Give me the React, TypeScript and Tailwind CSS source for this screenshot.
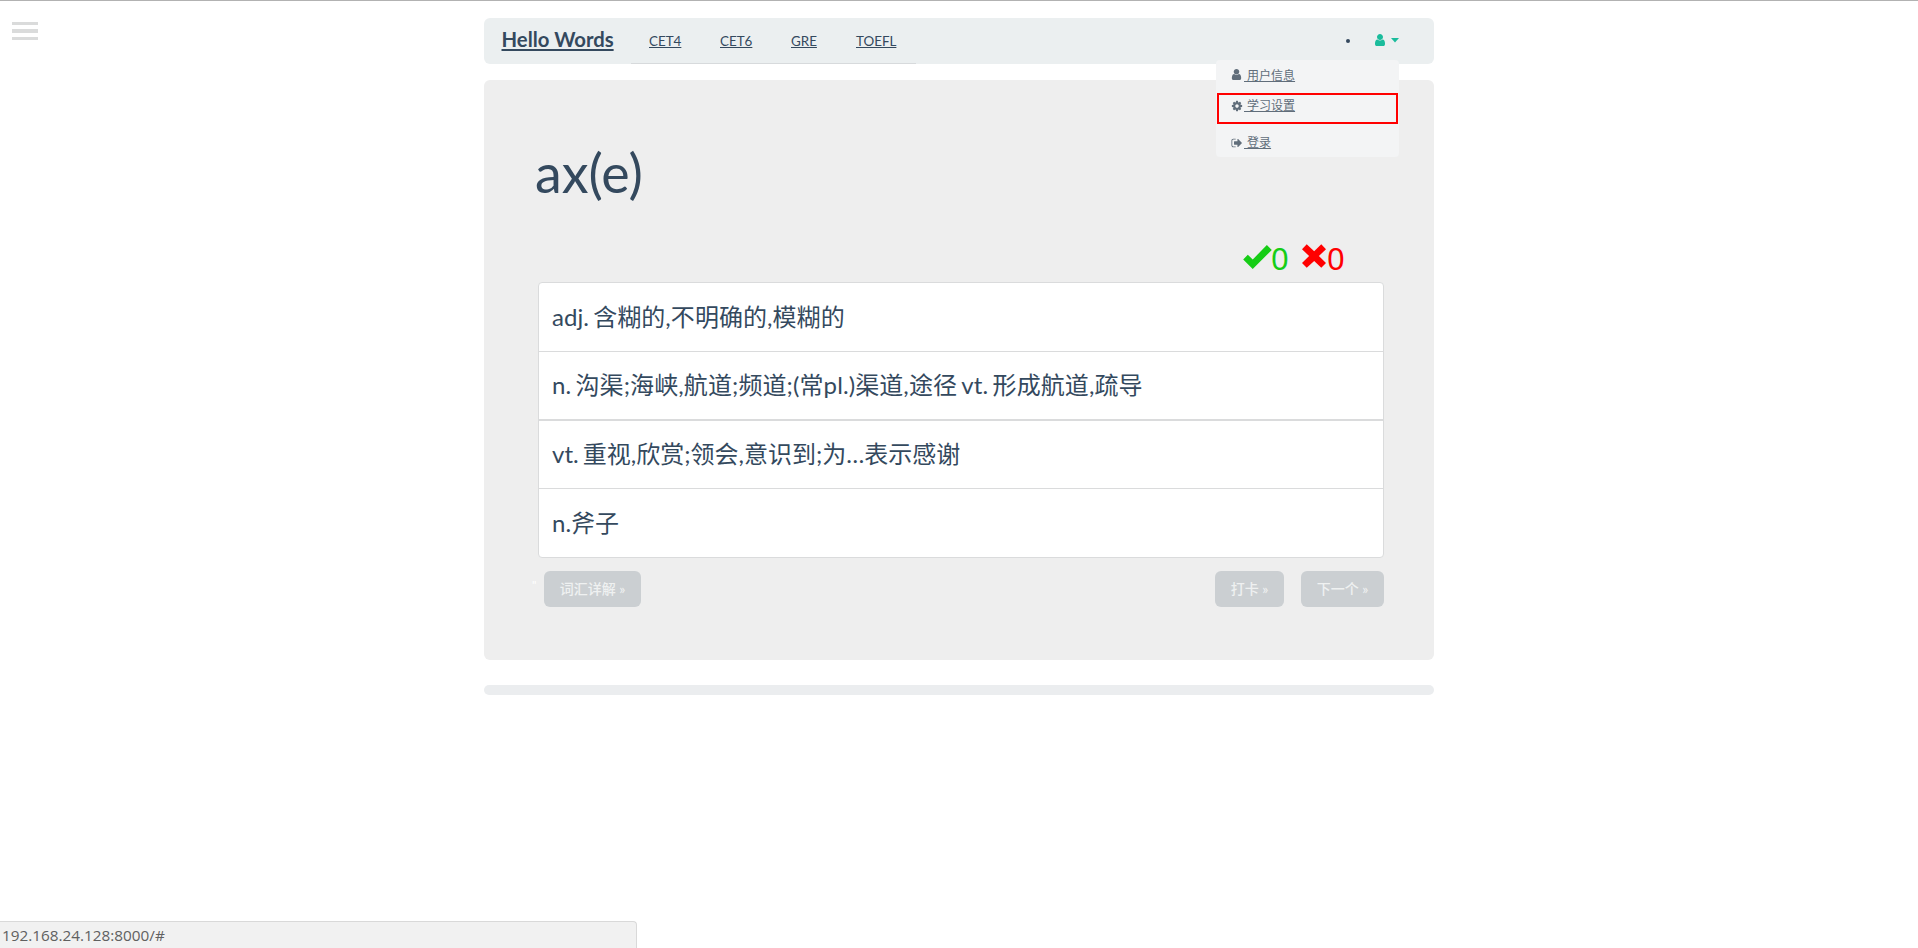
import React from "react";

const USER_PATH =
  "M1536 1399q0 109-62.5 187t-150.5 78h-854q-88 0-150.5-78t-62.5-187q0-85 8.5-160.5t31.5-152 58.5-131 94-89 134.5-34.5q131 128 313 128t313-128q76 0 134.5 34.5t94 89 58.5 131 31.5 152 8.5 160.5zm-256-887q0 159-112.5 271.5t-271.5 112.5-271.5-112.5-112.5-271.5 112.5-271.5 271.5-112.5 271.5 112.5 112.5 271.5z";
const COG_PATH =
  "M1152 896q0-106-75-181t-181-75-181 75-75 181 75 181 181 75 181-75 75-181zm512-109v222q0 12-8 23t-20 13l-185 28q-19 54-39 91 35 50 107 138 10 12 10 25t-9 23q-27 37-99 108t-94 71q-12 0-26-9l-138-108q-44 23-91 38-16 136-29 186-7 28-36 28h-222q-14 0-24.5-8.5t-11.5-21.5l-28-184q-49-16-90-37l-141 107q-10 9-25 9-14 0-25-11-126-114-165-168-7-10-7-23 0-12 8-23 15-21 51-66.5t54-70.5q-27-50-41-99l-183-27q-13-2-21-12.5t-8-23.5v-222q0-12 8-23t19-13l186-28q14-46 39-92-40-57-107-138-10-12-10-24 0-10 9-23 26-36 98.5-107.5t94.5-71.5q13 0 26 10l138 107q44-23 91-38 16-136 29-186 7-28 36-28h222q14 0 24.5 8.5t11.5 21.5l28 184q49 16 90 37l142-107q9-9 24-9 13 0 25 10 129 119 165 170 7 8 7 22 0 12-8 23-15 21-51 66.5t-54 70.5q26 50 41 98l183 28q13 2 21 12.5t8 23.5z";
const SIGN_OUT_PATH =
  "M704 1440q0 4 1 20t.5 26.5-3 23.5-10 19.5-20.5 6.5h-320q-119 0-203.5-84.5t-84.5-203.5v-704q0-119 84.5-203.5t203.5-84.5h320q13 0 22.5 9.5t9.5 22.5q0 4 1 20t.5 26.5-3 23.5-10 19.5-20.5 6.5h-320q-66 0-113 47t-47 113v704q0 66 47 113t113 47h312l11.5 1 11.5 3 8 5.5 7 9 2 13.5zm928-544q0 26-19 45l-544 544q-19 19-45 19t-45-19-19-45v-288h-448q-26 0-45-19t-19-45v-384q0-26 19-45t45-19h448v-288q0-26 19-45t45-19 45 19l544 544q19 19 19 45z";

function Icon({ path, className }: { path: string; className: string }) {
  return (
    <svg viewBox="0 0 1792 1792" fill="currentColor" className={className}>
      <path d={path} />
    </svg>
  );
}

const exams = [
  { label: "CET4", width: "w-[71px]" },
  { label: "CET6", width: "w-[71px]" },
  { label: "GRE", width: "w-[65px]" },
  { label: "TOEFL", width: "w-[60px]" },
];

const options = [
  { text: "adj. 含糊的,不明确的,模糊的", row: "h-[68px] tracking-[0.05px]" },
  { text: "n. 沟渠;海峡,航道;频道;(常pl.)渠道,途径 vt. 形成航道,疏导", row: "h-[68px] border-t tracking-[0.1px]" },
  { text: "vt. 重视,欣赏;领会,意识到;为…表示感谢", row: "h-[69px] border-t-2" },
  { text: "n.斧子", row: "h-[69px] border-t" },
];

function Navbar() {
  return (
    <nav className="relative flex h-[46px] rounded-md bg-[#ebeff0]">
      <a className="ml-[17.5px] w-[129.5px] pt-[7px] text-[20.3px] leading-[28px] font-bold underline">Hello Words</a>
      <div className="flex h-[46px] w-[285px] border-b border-[#d7dadc] pt-[13px] pl-[18px] text-[13.4px] leading-[20px]">
        {exams.map((e) => (
          <a key={e.label} className={`${e.width} shrink-0 underline`}>
            {e.label}
          </a>
        ))}
      </div>
      <div className="ml-auto flex items-center pr-[35px] text-[#1abc9c]">
        <span className="mr-[23px] h-1 w-1 rounded-full bg-[#34495e]" />
        <Icon path={USER_PATH} className="mt-[-2px] h-[14px] w-[14px]" />
        <svg viewBox="0 0 8 5" className="mt-[-1px] ml-[4px] h-[5px] w-[8px]" fill="currentColor">
          <path d="M0 0H8L4 4.5Z" />
        </svg>
      </div>
      <UserMenu />
    </nav>
  );
}

function UserMenu() {
  return (
    <div className="absolute top-[42px] left-[732px] z-10 flex h-[97px] w-[183px] flex-col rounded bg-[#f3f4f5] text-[12px] leading-[18px] text-[#606d7a]">
      <a className="flex h-[33px] items-start pt-[7px] pl-[14px]">
        <Icon path={USER_PATH} className="mt-[1px] h-[13px] w-[13px]" />
        <span className="ml-px whitespace-pre underline"> 用户信息</span>
      </a>
      <a className="ml-px flex h-[31px] w-[181px] items-start border-2 border-[#ff0000] pt-[2px] pl-[12px]">
        <Icon path={COG_PATH} className="mt-[3px] h-[12px] w-[12px]" />
        <span className="ml-px whitespace-pre underline"> 学习设置</span>
      </a>
      <a className="flex items-start pt-[10px] pl-[15px]">
        <Icon path={SIGN_OUT_PATH} className="mt-[3px] h-[12px] w-[12px]" />
        <span className="ml-px whitespace-pre underline"> 登录</span>
      </a>
    </div>
  );
}

function Score() {
  return (
    <div className="flex h-[36px] pl-[708px] font-['Noto_Sans',sans-serif] text-[31px] leading-[36px] font-normal">
      <div className="flex w-[58px] text-[#16cd16]">
        <svg viewBox="0 0 87 73" className="mt-[5px] h-[24px] w-[29px]" fill="currentColor">
          <path d="M0 44L14 30L29 44L72 0L87 15L29 73Z" />
        </svg>
        <span className="ml-[-1px]">0</span>
      </div>
      <div className="flex text-[#ff0000]">
        <svg viewBox="0 0 71 70" className="mt-[4px] mr-[1px] ml-[1px] h-[24px] w-[24px]" fill="currentColor">
          <path d="M0 15L14 0L36 21L57 0L71 15L50 35L71 56L57 70L36 50L14 70L0 56L21 35Z" />
        </svg>
        <span>0</span>
      </div>
    </div>
  );
}

function Button({ children, className }: { children: React.ReactNode; className: string }) {
  return (
    <button className={`h-[36px] rounded-md bg-[#cbcfd2] text-center text-[14px] leading-[36px] font-medium text-[#eff1f1] ${className}`}>
      {children}
    </button>
  );
}

export default function App() {
  return (
    <div className="relative h-[948px] overflow-hidden border-t border-[#b2b2b2] bg-white pt-[17px] font-['Lato','Noto_Sans_CJK_SC',sans-serif] text-[#34495e]">
      <div className="absolute top-[21px] left-[12px] flex w-[26px] flex-col">
        <span className="h-[3px] bg-[#dadbdb]" />
        <span className="mt-1 h-[4px] bg-[#dadbdb]" />
        <span className="mt-1 h-[3px] bg-[#dadbdb]" />
      </div>

      <div className="ml-[484px] w-[950px]">
        <Navbar />
        <main className="mt-[16px] flex h-[580px] flex-col rounded-md bg-[#eeeeee]">
          <h1 className="mt-[58px] ml-[51px] h-[70px] text-[53.8px] leading-[68px]">ax(e)</h1>
          <div className="mt-[32px] ml-[51px]">
            <Score />
          </div>
          <div className="mt-[6px] ml-[54px] w-[846px] rounded border border-[#dadbdc] bg-white">
            {options.map((o) => (
              <div key={o.text} className={`${o.row} flex items-center border-[#dadbdc] pb-px pl-[13px] text-[24px] whitespace-nowrap [word-spacing:-2px]`}>
                {o.text}
              </div>
            ))}
          </div>
          <div className="mt-[13px] ml-[48px] flex w-[852px]">
            <span className="w-[12px] pt-[8px] text-[12px] leading-none text-white">"</span>
            <Button className="w-[97px]">词汇详解 »</Button>
            <Button className="ml-auto w-[69px]">打卡 »</Button>
            <Button className="ml-[17px] w-[83px]">下一个 »</Button>
          </div>
        </main>
        <div className="mt-[25px] h-[10px] rounded-full bg-[#ebedef]" />
      </div>

      <div className="absolute bottom-0 left-0 h-[27px] w-[637px] rounded-tr border-t border-r border-[#d9d9d9] bg-[#f1f1f1] pl-[2px] font-['Open_Sans',sans-serif] text-[15.3px] leading-[26px] text-[#606060]">
        192.168.24.128:8000/#
      </div>
    </div>
  );
}
